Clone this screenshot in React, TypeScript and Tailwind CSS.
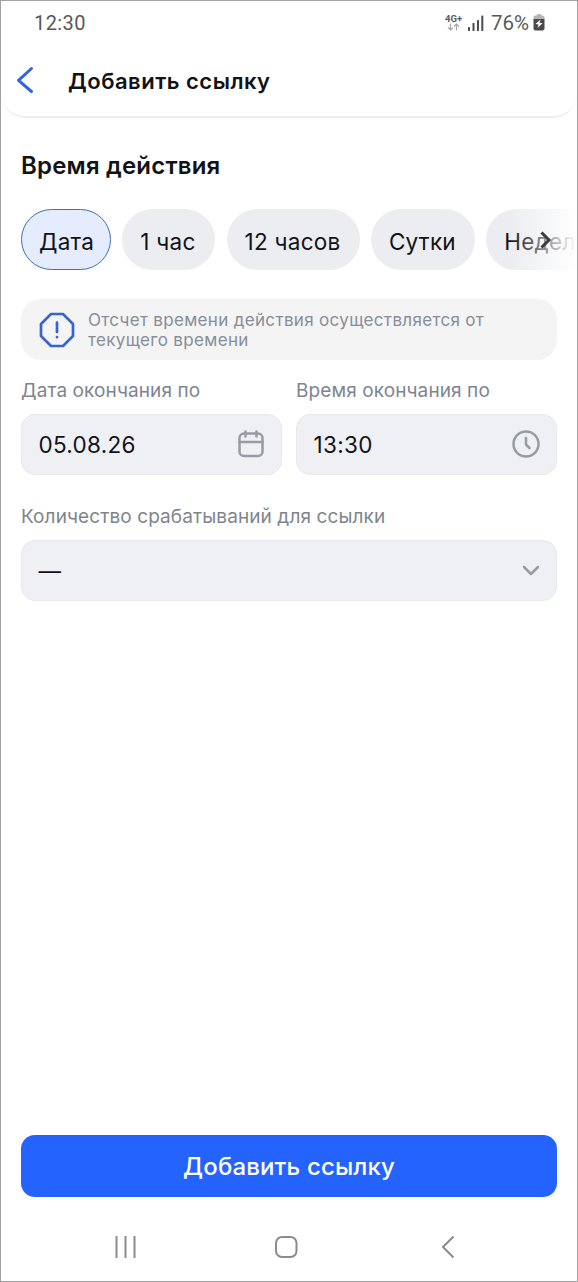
import clsx from "clsx";

const PERIODS = [
  { id: "date", label: "Дата", width: "w-[90px]" },
  { id: "hour", label: "1 час", width: "w-[93px]" },
  { id: "half-day", label: "12 часов", width: "w-[133px]" },
  { id: "day", label: "Сутки", width: "w-[104px]" },
  { id: "week", label: "Неделя", width: "w-[126px]" },
];

function StatusBar() {
  return (
    <div className="flex h-[43px] items-center justify-between pr-[32px] pl-[33px] font-[Roboto,sans-serif] text-[#58595b]">
      <span className="text-[20px] leading-6 tracking-[0.4px]">12:30</span>
      <div className="flex items-center">
        <div className="flex w-[17px] flex-col items-center">
          <span className="text-[9.5px] leading-[9px] font-bold">4G+</span>
          <svg width="13" height="8" viewBox="0 0 13 8" fill="none" stroke="#a9a9a9" strokeWidth="1.2">
            <path d="M3.5 0.5v6.5M1 4.5l2.5 2.5L6 4.5M9.5 7.5V1M7 3.5L9.5 1 12 3.5" />
          </svg>
        </div>
        <svg className="ml-[6px]" width="16" height="16" viewBox="0 0 16 16" fill="#4c4c4c">
          <rect x="0" y="12" width="2" height="4" rx="0.5" />
          <rect x="4.5" y="8" width="2" height="8" rx="0.5" />
          <rect x="9" y="5" width="2" height="11" rx="0.5" />
          <rect x="13.3" y="0.5" width="2" height="15.5" rx="0.5" />
        </svg>
        <span className="ml-[7px] w-[41px] text-[20.5px] leading-6 whitespace-nowrap">76%</span>
        <svg className="ml-[1px]" width="12" height="17" viewBox="0 0 12 17">
          <path d="M3.5 1.5q0-1.5 1.5-1.5h2q1.5 0 1.5 1.5h1q2 0 2 2V6H.5V3.5q0-2 2-2z" fill="#b5b5b5" />
          <path d="M.5 5h11v9.5q0 2-2 2h-7q-2 0-2-2z" fill="#4a4a4a" />
          <path d="M7.5 5.5L2.5 10l3 .6L4.5 14l5-4.7-3-.6z" fill="#fff" />
        </svg>
      </div>
    </div>
  );
}

function Header() {
  return (
    <header className="h-[117px] rounded-b-[24px] border-b-2 border-[#efefef] bg-white">
      <StatusBar />
      <div className="flex h-[73px] items-center pl-[15px]">
        <svg className="mb-[2px]" width="18" height="28" viewBox="0 0 18 28" fill="none" stroke="#2f66dc" strokeWidth="3" strokeLinecap="round" strokeLinejoin="round">
          <path d="M15.5 2.5L2.5 14.3l13 11.2" />
        </svg>
        <h1 className="ml-[34px] text-[22px] leading-7 font-semibold tracking-[0.5px]">Добавить ссылку</h1>
      </div>
    </header>
  );
}

function Periods() {
  return (
    <div className="relative mt-[27px] overflow-hidden">
      <div className="flex gap-[11.3px] pl-5">
        {PERIODS.map((period) => (
          <button
            key={period.id}
            className={clsx(
              "flex h-[61px] shrink-0 items-center rounded-full border-[1.5px] pt-[5px] pl-[17px] text-[22.5px] tracking-[0.25px]",
              period.width,
              period.id === "date" ? "border-[#3f6cc4] bg-[#e5ecfe]" : "border-transparent bg-[#ecedf1]"
            )}
          >
            <span className="whitespace-nowrap">{period.label}</span>
          </button>
        ))}
      </div>
      <div className="absolute inset-y-0 right-0 flex w-[68px] items-center bg-linear-to-r from-white/0 to-white pl-[31px]">
        <svg width="12" height="18" viewBox="0 0 12 18" fill="none" stroke="#3c3c3e" strokeWidth="3">
          <path d="M1.5 1.5L9 9l-7.5 7.5" />
        </svg>
      </div>
    </div>
  );
}

function Notice() {
  return (
    <div className="mx-5 mt-[29px] flex h-[61px] items-center rounded-[20px] bg-[#f4f4f4] pl-[18px]">
      <svg width="36" height="36" viewBox="0 0 36 36" fill="none" stroke="#3764d0" strokeWidth="2.7" strokeLinejoin="round" strokeLinecap="round">
        <path d="M12 2h12L34 12v12L24 34H12L2 24V12z" />
        <path d="M18 10.5v9.5M18 25v.2" />
      </svg>
      <p className="ml-[13px] text-[17px] leading-5 tracking-[0.33px] text-[#868e98]">
        Отсчет времени действия осуществляется от
        <br />
        текущего времени
      </p>
    </div>
  );
}

function Field({ label, value, icon }: { label: string; value: string; icon: React.ReactNode }) {
  return (
    <div className="min-w-0 flex-1">
      <div className="text-[19px] leading-6 tracking-[0.1px] whitespace-nowrap text-[#7e858d]">{label}</div>
      <div className="mt-[11px] flex h-[61px] items-center justify-between rounded-[14px] border border-[#e8e9ec] bg-[#eff0f4] pr-4 pl-[16.5px]">
        <span className="text-[22.5px] tracking-[0.3px]">{value}</span>
        {icon}
      </div>
    </div>
  );
}

const iconProps = { fill: "none", stroke: "#979ca3", strokeWidth: 2.5, strokeLinecap: "round", strokeLinejoin: "round" } as const;

function CalendarIcon() {
  return (
    <svg className="mr-px mb-[2px]" width="26" height="28" viewBox="0 0 26 28" {...iconProps}>
      <rect x="1.5" y="3.5" width="23" height="22.5" rx="4.5" />
      <path d="M1.5 12h23M7.5 1.5v5M18.5 1.5v5" />
    </svg>
  );
}

function ClockIcon() {
  return (
    <svg className="mb-px" width="28" height="28" viewBox="0 0 28 28" {...iconProps}>
      <circle cx="14" cy="14" r="12.5" />
      <path d="M14 8v6.5l3.5 3.5" />
    </svg>
  );
}

function ChevronDown() {
  return (
    <svg width="18" height="11" viewBox="0 0 18 11" {...iconProps}>
      <path d="M2 2l7 7 7-7" />
    </svg>
  );
}

function SystemNav() {
  return (
    <nav className="mt-[38px] flex h-6 items-center pl-[93px]">
      <svg width="22" height="22" viewBox="0 0 22 22" stroke="#8b8b8b" strokeWidth="2">
        <path d="M2.5 0v22M11.5 0v22M20.5 0v22" />
      </svg>
      <svg className="ml-[138px]" width="24" height="24" viewBox="0 0 24 24" fill="none" stroke="#8b8b8b" strokeWidth="2">
        <rect x="2" y="2" width="20.5" height="20" rx="6" />
      </svg>
      <svg className="ml-[143px]" width="14" height="24" viewBox="0 0 14 24" fill="none" stroke="#8b8b8b" strokeWidth="2">
        <path d="M12.5 1.5L2 12l10.5 10.5" />
      </svg>
    </nav>
  );
}

export default function App() {
  return (
    <div className="flex h-[1282px] w-[578px] flex-col border border-[#a2a2a2] bg-white font-[Inter,sans-serif] text-[#121317]">
      <Header />
      <main className="flex-1">
        <h2 className="mt-8 pl-5 text-[24px] leading-8 font-semibold tracking-[0.2px]">Время действия</h2>
        <Periods />
        <Notice />
        <div className="mt-[19px] flex gap-[14px] px-5">
          <Field label="Дата окончания по" value="05.08.26" icon={<CalendarIcon />} />
          <Field label="Время окончания по" value="13:30" icon={<ClockIcon />} />
        </div>
        <div className="mt-[30px] flex px-5">
          <Field label="Количество срабатываний для ссылки" value="—" icon={<ChevronDown />} />
        </div>
      </main>
      <footer className="h-[146px] px-5">
        <button className="h-[62px] w-full rounded-[14px] bg-[#2563ff] pt-[2px] text-[24px] font-medium tracking-[0.15px] text-white">
          Добавить ссылку
        </button>
        <SystemNav />
      </footer>
    </div>
  );
}
